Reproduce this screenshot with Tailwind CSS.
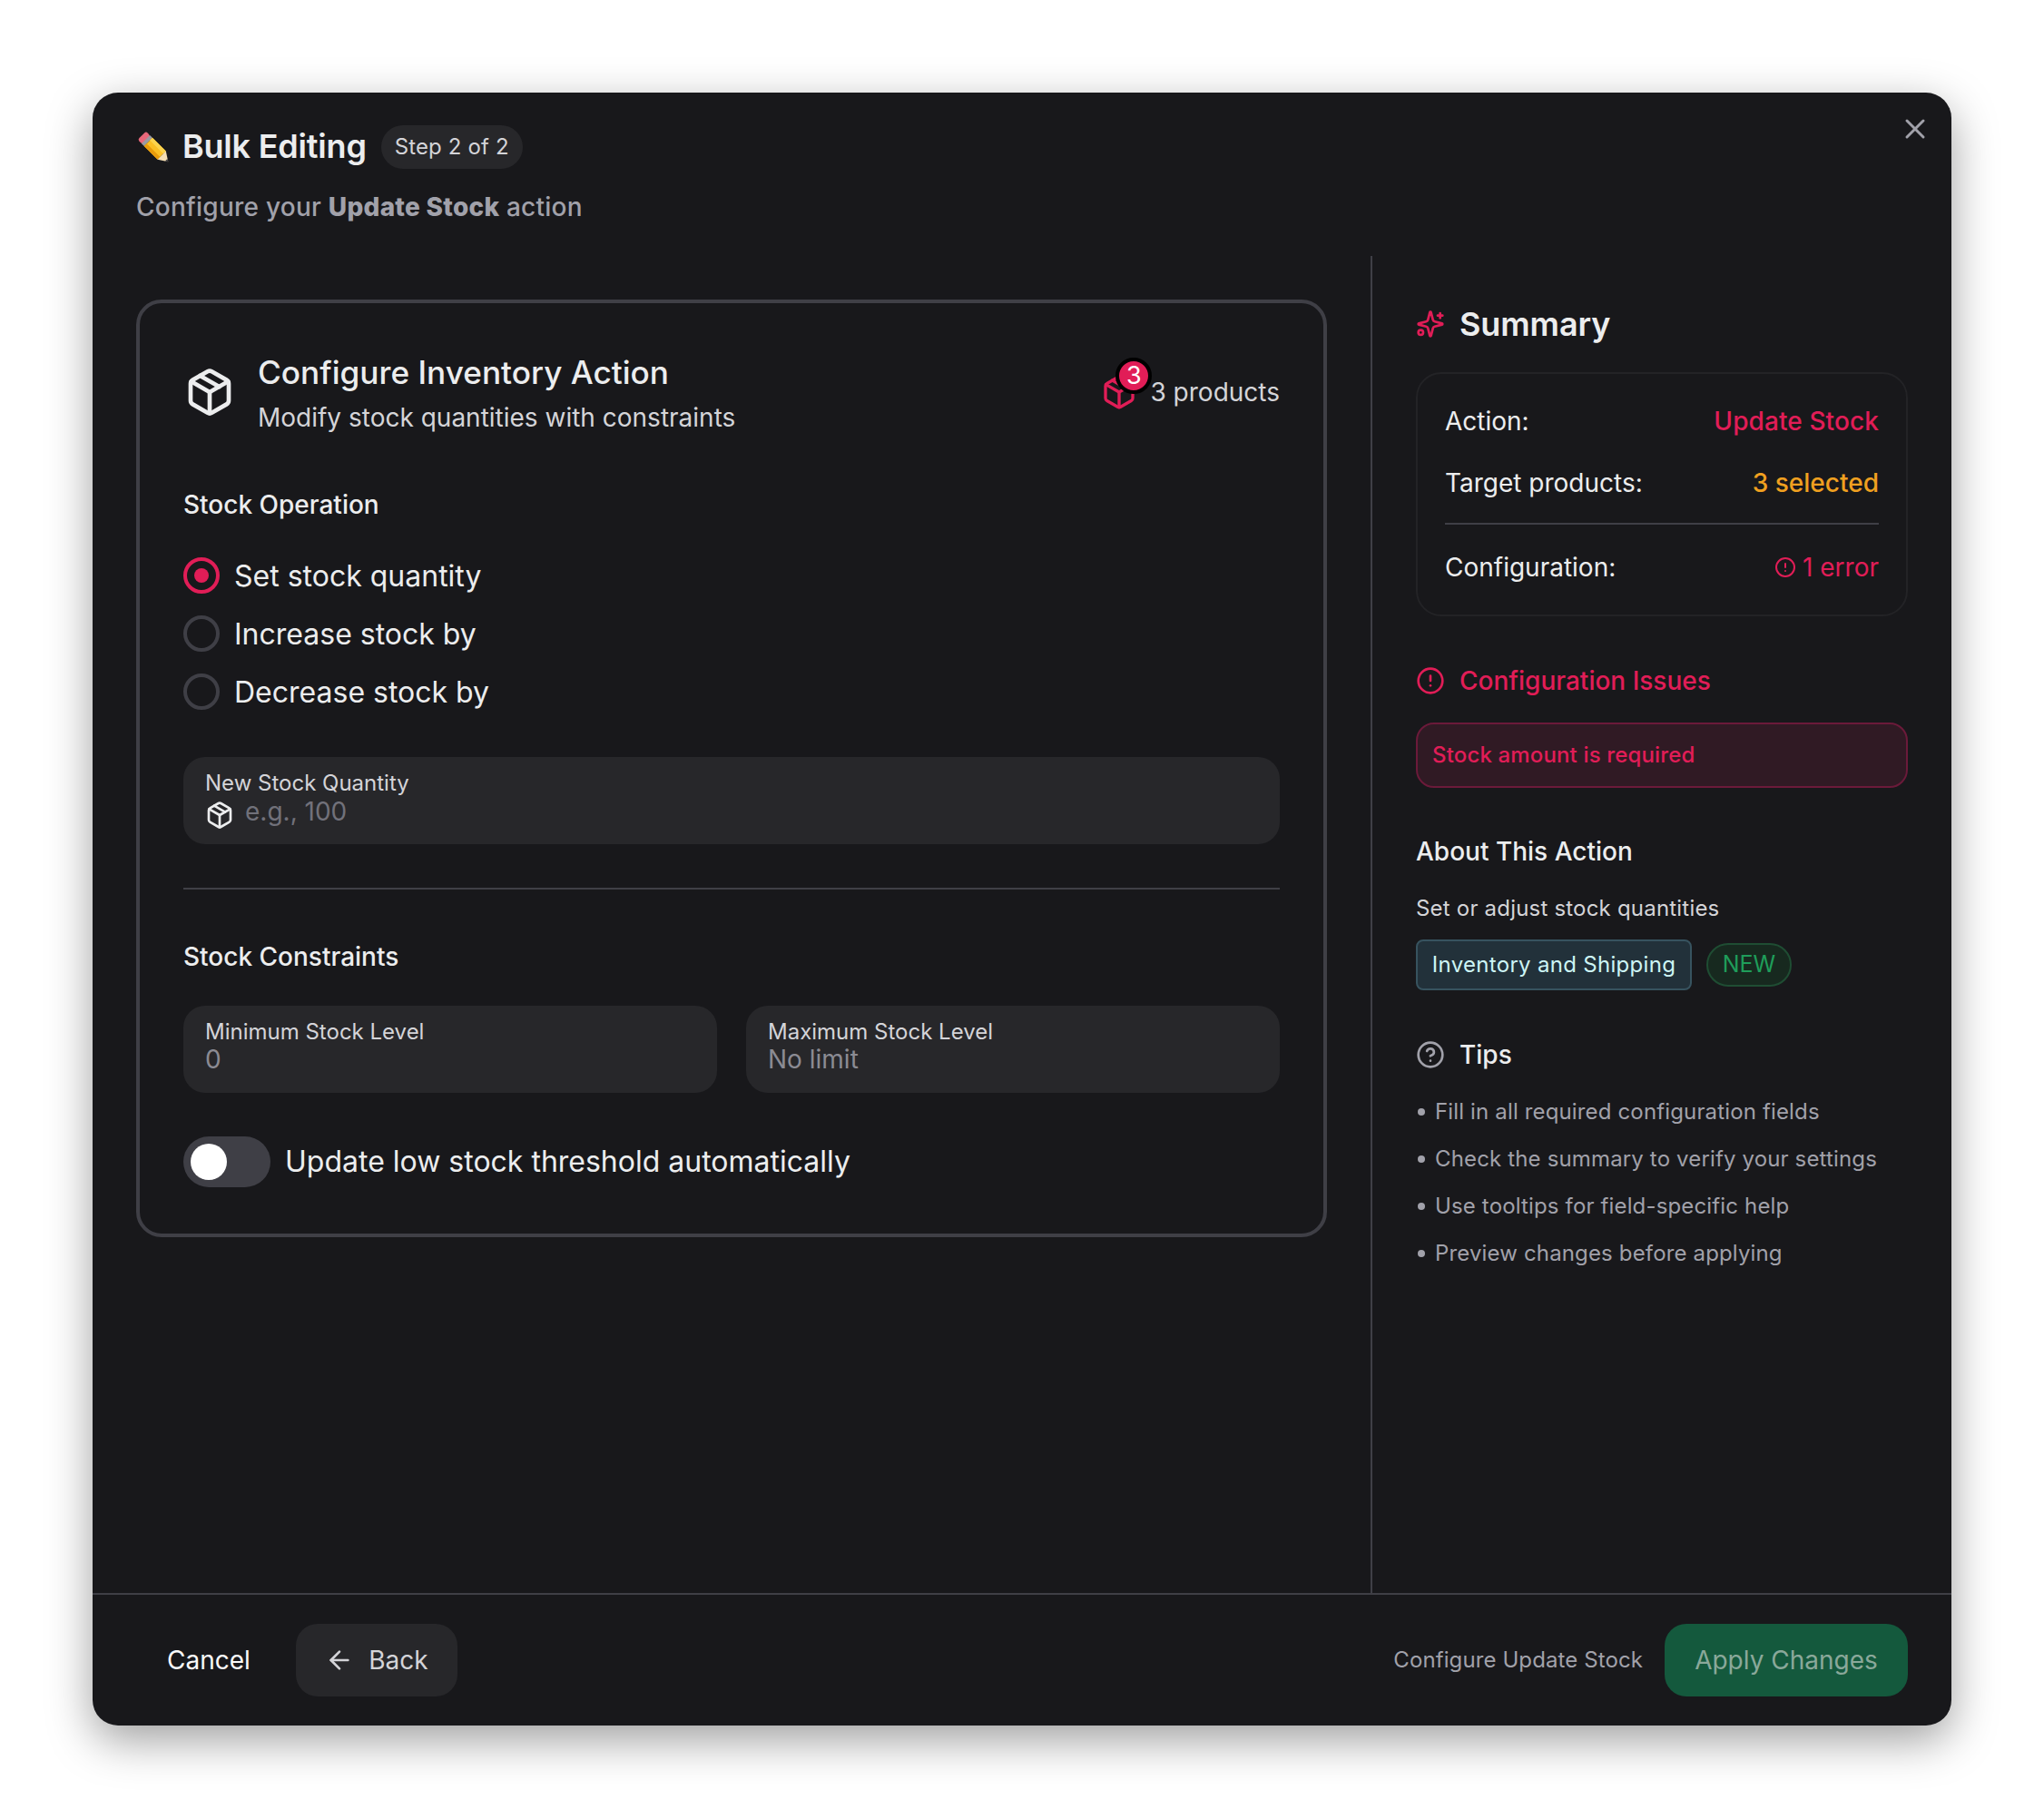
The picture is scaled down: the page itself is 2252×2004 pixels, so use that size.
<!DOCTYPE html>
<html lang="en">
<head>
  <meta charset="UTF-8" />
  <title>Bulk Editing</title>
  <script src="https://cdn.jsdelivr.net/npm/@tailwindcss/browser@4"></script>
</head>
<body class="bg-white font-['Inter',sans-serif] w-[2252px] h-[2004px] overflow-hidden">
  <!-- Modal -->
  <div class="relative ml-[102px] mt-[102px] w-[2048px] h-[1799px] bg-[#18181b] rounded-[28px] flex flex-col shadow-[0_16px_50px_rgba(0,0,0,0.38)]">
    <button class="absolute top-[28px] right-[28px] w-[24px] h-[24px] text-[#a1a1aa]">
      <svg class="w-[24px] h-[24px]" viewBox="0 0 24 24" fill="none" stroke="currentColor" stroke-width="3" stroke-linecap="round"><path d="M21 3 3 21"/><path d="m3 3 18 18"/></svg>
    </button>

    <!-- Header -->
    <header class="h-[180px] shrink-0 px-12 pt-[36px]">
      <div class="flex items-center h-[48px]">
        <svg class="w-[38px] h-[38px] mr-[13px]" viewBox="0 0 38 38">
          <g transform="translate(7 7) rotate(45)">
            <rect x="-1" y="-6.5" width="7" height="13" rx="2.5" fill="#e8677a"/>
            <rect x="5" y="-6.5" width="4" height="13" fill="#9a9aa2"/>
            <rect x="9" y="-6.5" width="21" height="13" fill="#fbbf24"/>
            <rect x="9" y="-6.5" width="21" height="4" fill="#fcd34d"/>
            <rect x="9" y="2.5" width="21" height="4" fill="#e89b0c"/>
            <polygon points="30,-6.5 30,6.5 40,0" fill="#f5deb3"/>
            <polygon points="37,-1.8 37,1.8 40,0" fill="#333338"/>
          </g>
        </svg>
        <h1 class="-mt-[2px] text-[36px] font-semibold text-[#ecedee] tracking-[-0.2px]">Bulk Editing</h1>
        <span class="ml-[16px] h-[48px] w-[156px] flex items-center justify-center rounded-full bg-[#27272a] text-[24px] tracking-[0.15px] text-[#d4d4d8]">Step 2 of 2</span>
      </div>
      <p class="mt-[18px] text-[28px] leading-[48px] tracking-[0.25px] font-medium text-[#a1a1aa]">Configure your <strong class="font-extrabold">Update Stock</strong> action</p>
    </header>

    <!-- Body -->
    <div class="flex-1 flex min-h-0">
      <main class="w-[1408px] shrink-0 pl-12 pr-12 pt-12">
        <section class="h-[1033px] border-4 border-[#3f3f46] rounded-[28px] pl-[48px] pr-[48px] pt-[40px]">
          <div class="flex items-center h-[116px]">
            <svg class="w-[56px] h-[56px] shrink-0 ml-[1px] text-[#ecedee]" viewBox="0 0 24 24" fill="none" stroke="currentColor" stroke-width="2" stroke-linecap="round" stroke-linejoin="round"><path d="M11 21.73a2 2 0 0 0 2 0l7-4a2 2 0 0 0 1-1.73V8a2 2 0 0 0-1-1.73l-7-4a2 2 0 0 0-2 0l-7 4A2 2 0 0 0 3 8v8a2 2 0 0 0 1 1.73z"/><path d="M12 22V12"/><polyline points="3.29 7 12 12 20.71 7"/><path d="m7.5 4.27 9 5.15"/></svg>
            <div class="ml-[25px] pt-[4px]">
              <h2 class="text-[35.2px] leading-[52px] font-medium text-[#ecedee]">Configure Inventory Action</h2>
              <p class="text-[28px] leading-[48px] text-[#d4d4d8]">Modify stock quantities with constraints</p>
            </div>
            <div class="ml-auto flex items-center">
              <div class="relative w-[54px] h-[40px]">
                <svg class="w-[40px] h-[40px] text-[#e11d57]" viewBox="0 0 24 24" fill="none" stroke="currentColor" stroke-width="2" stroke-linecap="round" stroke-linejoin="round"><path d="M11 21.73a2 2 0 0 0 2 0l7-4a2 2 0 0 0 1-1.73V8a2 2 0 0 0-1-1.73l-7-4a2 2 0 0 0-2 0l-7 4A2 2 0 0 0 3 8v8a2 2 0 0 0 1 1.73z"/><path d="M12 22V12"/><polyline points="3.29 7 12 12 20.71 7"/><path d="m7.5 4.27 9 5.15"/></svg>
                <span class="absolute left-[16px] top-[-18px] w-[40px] h-[40px] flex items-center justify-center rounded-full bg-[#e11d57] border-4 border-black text-[27px] text-white">3</span>
              </div>
              <span class="text-[28px] text-[#d4d4d8]">3 products</span>
            </div>
          </div>

          <h3 class="mt-[46px] text-[28px] leading-[40px] font-medium text-[#ecedee]">Stock Operation</h3>

          <div class="mt-[38px] flex flex-col gap-[24px]">
            <label class="flex items-center h-[40px]">
              <span class="w-[40px] h-[40px] rounded-full border-4 border-[#e11d57] flex items-center justify-center"><span class="w-[16px] h-[16px] rounded-full bg-[#e11d57]"></span></span>
              <span class="ml-[16px] pt-[2px] text-[32px] text-[#ecedee]">Set stock quantity</span>
            </label>
            <label class="flex items-center h-[40px]">
              <span class="w-[40px] h-[40px] rounded-full border-4 border-[#3f3f46]"></span>
              <span class="ml-[16px] pt-[2px] text-[32px] text-[#ecedee]">Increase stock by</span>
            </label>
            <label class="flex items-center h-[40px]">
              <span class="w-[40px] h-[40px] rounded-full border-4 border-[#3f3f46]"></span>
              <span class="ml-[16px] pt-[2px] text-[32px] text-[#ecedee]">Decrease stock by</span>
            </label>
          </div>

          <div class="mt-[52px] h-[96px] rounded-[24px] bg-[#27272a] px-[24px] pt-[13px]">
            <div class="text-[24px] leading-[32px] text-[#d4d4d8]">New Stock Quantity</div>
            <div class="flex items-center h-[32px]">
              <svg class="w-[32px] h-[32px] mt-[6px] text-[#ecedee]" viewBox="0 0 24 24" fill="none" stroke="currentColor" stroke-width="2" stroke-linecap="round" stroke-linejoin="round"><path d="M11 21.73a2 2 0 0 0 2 0l7-4a2 2 0 0 0 1-1.73V8a2 2 0 0 0-1-1.73l-7-4a2 2 0 0 0-2 0l-7 4A2 2 0 0 0 3 8v8a2 2 0 0 0 1 1.73z"/><path d="M12 22V12"/><polyline points="3.29 7 12 12 20.71 7"/><path d="m7.5 4.27 9 5.15"/></svg>
              <span class="ml-[12px] -mt-[3px] text-[28px] text-[#71717a]">e.g., 100</span>
            </div>
          </div>

          <div class="mt-[48px] h-[2px] bg-[#3f3f46]"></div>

          <h3 class="mt-[54px] text-[28px] leading-[40px] font-medium text-[#ecedee]">Stock Constraints</h3>

          <div class="mt-[34px] grid grid-cols-2 gap-[32px]">
            <div class="h-[96px] rounded-[24px] bg-[#27272a] px-[24px] pt-[13px]">
              <div class="text-[24px] leading-[32px] text-[#d4d4d8]">Minimum Stock Level</div>
              <div class="-mt-[2px] text-[28px] leading-[32px] text-[#8b8b93]">0</div>
            </div>
            <div class="h-[96px] rounded-[24px] bg-[#27272a] px-[24px] pt-[13px]">
              <div class="text-[24px] leading-[32px] text-[#d4d4d8]">Maximum Stock Level</div>
              <div class="-mt-[2px] text-[28px] leading-[32px] text-[#8b8b93]">No limit</div>
            </div>
          </div>

          <div class="mt-[48px] flex items-center">
            <span class="w-[96px] h-[56px] rounded-full bg-[#3f3f46] flex items-center pl-[8px]"><span class="w-[40px] h-[40px] rounded-full bg-white"></span></span>
            <span class="ml-[16px] text-[32px] text-[#ecedee]">Update low stock threshold automatically</span>
          </div>
        </section>
      </main>

      <!-- Summary -->
      <aside class="flex-1 border-l-2 border-[#3f3f46] pl-[48px] pr-12 pt-[55px]">
        <div class="flex items-center h-[40px]">
          <svg class="w-[32px] h-[32px] text-[#e11d57]" viewBox="0 0 24 24" fill="none" stroke="currentColor" stroke-width="2" stroke-linecap="round" stroke-linejoin="round"><path d="M9.937 15.5A2 2 0 0 0 8.5 14.063l-6.135-1.582a.5.5 0 0 1 0-.962L8.5 9.936A2 2 0 0 0 9.937 8.5l1.582-6.135a.5.5 0 0 1 .963 0L14.063 8.5A2 2 0 0 0 15.5 9.937l6.135 1.581a.5.5 0 0 1 0 .964L15.5 14.063a2 2 0 0 0-1.437 1.437l-1.582 6.135a.5.5 0 0 1-.963 0z"/><path d="M20 3v4"/><path d="M22 5h-4"/><circle cx="4" cy="19" r="2"/></svg>
          <h3 class="ml-[16px] text-[36px] font-semibold tracking-[-0.1px] text-[#ecedee]">Summary</h3>
        </div>

        <div class="mt-[33px] h-[269px] rounded-[28px] border-2 border-[#232326] px-[30px] pt-[20px]">
          <div class="flex justify-between items-center h-[64px] text-[28px]">
            <span class="text-[#ecedee]">Action:</span>
            <span class="font-medium tracking-[0.1px] text-[#e11d57]">Update Stock</span>
          </div>
          <div class="mt-[4px] flex justify-between items-center h-[64px] text-[28px]">
            <span class="text-[#ecedee]">Target products:</span>
            <span class="font-medium text-[#f0a020]">3 selected</span>
          </div>
          <div class="mt-[12px] h-[2px] bg-[#3f3f46]"></div>
          <div class="mt-[15px] flex justify-between items-center h-[64px] text-[28px]">
            <span class="text-[#ecedee]">Configuration:</span>
            <span class="flex items-center text-[#e11d57]">
              <svg class="w-[24px] h-[24px] mr-[7px]" viewBox="0 0 24 24" fill="none" stroke="currentColor" stroke-width="2" stroke-linecap="round" stroke-linejoin="round"><circle cx="12" cy="12" r="10"/><line x1="12" x2="12" y1="8" y2="12"/><line x1="12" x2="12.01" y1="16" y2="16"/></svg>
              1 error
            </span>
          </div>
        </div>

        <div class="mt-[51px] flex items-center h-[40px]">
          <svg class="w-[32px] h-[32px] text-[#e11d57]" viewBox="0 0 24 24" fill="none" stroke="currentColor" stroke-width="2" stroke-linecap="round" stroke-linejoin="round"><circle cx="12" cy="12" r="10"/><line x1="12" x2="12" y1="8" y2="12"/><line x1="12" x2="12.01" y1="16" y2="16"/></svg>
          <h3 class="ml-[16px] text-[28px] font-medium text-[#e11d57]">Configuration Issues</h3>
        </div>

        <div class="mt-[26px] h-[72px] rounded-[20px] border-2 border-[#6b1a3a] bg-[#301a24] flex items-center pl-[16px] text-[24px] tracking-[0.15px] font-medium text-[#e11d57]">Stock amount is required</div>

        <h3 class="mt-[50px] text-[28px] leading-[40px] font-medium text-[#ecedee]">About This Action</h3>
        <p class="mt-[23px] text-[24px] leading-[40px] tracking-[0.2px] text-[#d4d4d8]">Set or adjust stock quantities</p>
        <div class="mt-[14px] flex items-center">
          <span class="h-[56px] w-[304px] rounded-[8px] border-2 border-[#37535f] bg-[#22313a] flex items-center justify-center text-[24px] tracking-[0.3px] text-[#cdf5f5]">Inventory and Shipping</span>
          <span class="ml-[16px] h-[48px] w-[94px] rounded-full border-2 border-[#1f4d33] bg-[#17291f] flex items-center justify-center text-[25px] text-[#1f9d5a]">NEW</span>
        </div>

        <div class="mt-[51px] flex items-center h-[40px]">
          <svg class="w-[32px] h-[32px] text-[#a1a1aa]" viewBox="0 0 24 24" fill="none" stroke="currentColor" stroke-width="2" stroke-linecap="round" stroke-linejoin="round"><circle cx="12" cy="12" r="10"/><path d="M9.09 9a3 3 0 0 1 5.83 1c0 2-3 3-3 3"/><path d="M12 17h.01"/></svg>
          <h3 class="ml-[16px] text-[28px] font-medium text-[#ecedee]">Tips</h3>
        </div>

        <ul class="mt-[23px] flex flex-col gap-[12px] text-[24px] leading-[40px] tracking-[0.15px] text-[#a1a1aa]">
          <li class="flex items-center"><span class="w-[8px] h-[8px] rounded-full bg-[#a1a1aa] ml-[2px] mr-[11px]"></span>Fill in all required configuration fields</li>
          <li class="flex items-center"><span class="w-[8px] h-[8px] rounded-full bg-[#a1a1aa] ml-[2px] mr-[11px]"></span>Check the summary to verify your settings</li>
          <li class="flex items-center"><span class="w-[8px] h-[8px] rounded-full bg-[#a1a1aa] ml-[2px] mr-[11px]"></span>Use tooltips for field-specific help</li>
          <li class="flex items-center"><span class="w-[8px] h-[8px] rounded-full bg-[#a1a1aa] ml-[2px] mr-[11px]"></span>Preview changes before applying</li>
        </ul>
      </aside>
    </div>

    <!-- Footer -->
    <footer class="h-[146px] shrink-0 border-t-2 border-[#3f3f46] px-12 flex items-center">
      <button class="ml-[34px] text-[28px] text-[#fafafa]">Cancel</button>
      <button class="ml-[50px] w-[178px] h-[80px] rounded-[24px] bg-[#27272a] flex items-center justify-center text-[28px] text-[#d4d4d8]">
        <svg class="w-[32px] h-[32px] mr-[16px]" viewBox="0 0 24 24" fill="none" stroke="currentColor" stroke-width="2" stroke-linecap="round" stroke-linejoin="round"><path d="m12 19-7-7 7-7"/><path d="M19 12H5"/></svg>
        Back
      </button>
      <span class="ml-auto text-[24px] tracking-[0.1px] text-[#a1a1aa]">Configure Update Stock</span>
      <button class="ml-[24px] w-[268px] h-[80px] rounded-[24px] bg-[#14593d] text-[28px] text-[#8aa89a]">Apply Changes</button>
    </footer>
  </div>
</body>
</html>
